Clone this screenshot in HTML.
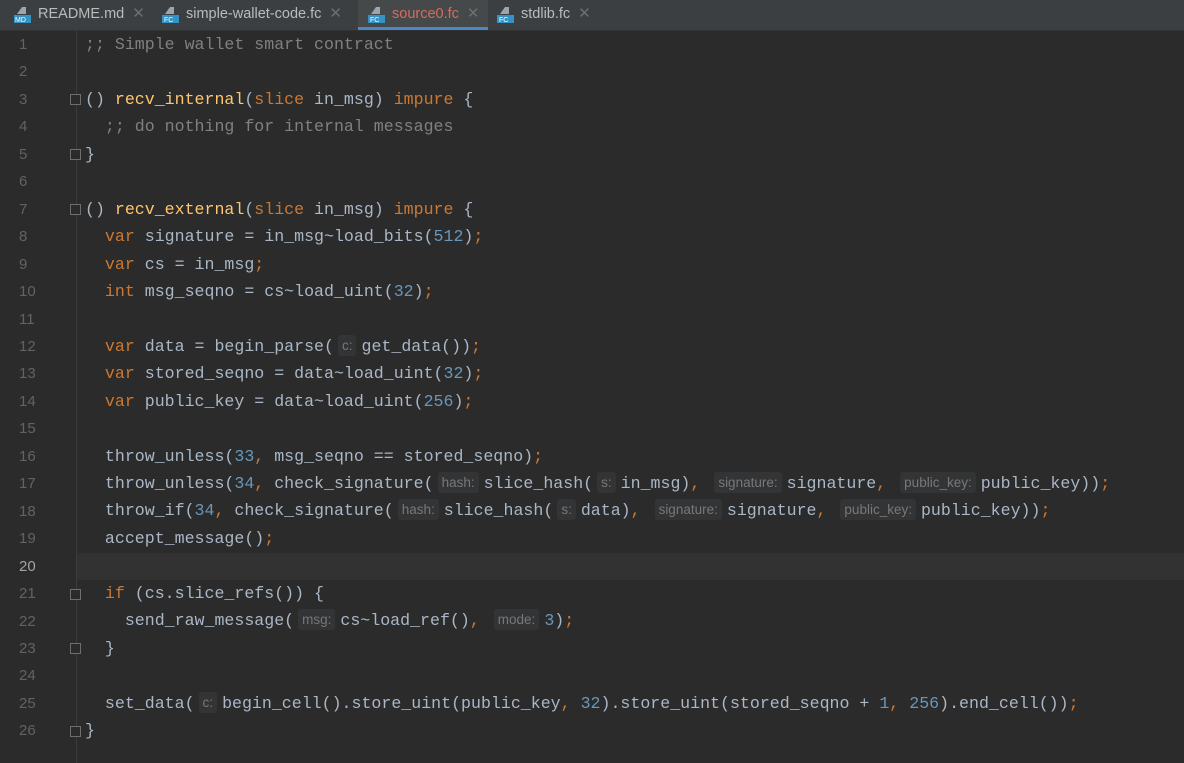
<!DOCTYPE html>
<html><head><meta charset="utf-8"><style>
body{margin:0;width:1184px;height:763px;background:#2b2b2b;overflow:hidden;font-family:"Liberation Mono",monospace;}
.tabs{position:absolute;left:0;top:0;width:1184px;height:30px;background:#3c3f41;border-bottom:1px solid #323232;font-family:"Liberation Sans",sans-serif;font-size:14.5px;color:#bbbbbb;}
.tab{position:absolute;top:0;height:30px;line-height:28px;white-space:nowrap;}
.tab .ic{position:absolute;left:0;top:6px;width:17px;height:17px;}
.tab .x{color:#6e6e6e;margin-left:8px;font-size:15px;}
.act{background:#45494a;border-bottom:3px solid #4a88c7;box-sizing:border-box;}
.gut{position:absolute;left:0;top:31px;width:76px;height:732px;background:#2b2b2b;border-right:1px solid #3c3c3c;}
.ln{position:absolute;left:0;width:40px;text-align:left;padding-left:19px;color:#606366;font-size:15px;font-family:"Liberation Sans",sans-serif;}
.code{position:absolute;left:85px;top:31px;font-size:16.6px;color:#a9b7c6;}
.l{height:27.45px;line-height:27.45px;white-space:pre;}
.k{color:#cc7832}.f{color:#ffc66d}.n{color:#6897bb}.c{color:#808080}
.h{display:inline-block;font-family:"Liberation Sans",sans-serif;font-size:13.5px;color:#787878;background:#333436;border-radius:3px;padding:0 4px;line-height:21px;margin:0 5px 0 4px;vertical-align:1px}
.hl{position:absolute;left:77px;top:553px;width:1107px;height:27px;background:#323232;}
.fold{position:absolute;left:70px;width:9px;height:9px;border:1px solid #6e6e6e;background:#2b2b2b;}
</style></head><body>
<div class="tabs">
<div class="tab act" style="left:358px;width:130px"></div>
<div class="tab" style="left:14px"><svg class="ic" viewBox="0 0 17 17"><path d="M8 1h4v7H3z" fill="#9aa7b0"/><rect x="0" y="9" width="17" height="8" fill="#3592c4"/><text x="1" y="16" font-size="7" fill="#fff" font-family="Liberation Sans">MD</text></svg><span style="margin-left:24px">README.md</span><span class="x">✕</span></div>
<div class="tab" style="left:162px"><svg class="ic" viewBox="0 0 17 17"><path d="M8 1h4v7H3z" fill="#9aa7b0"/><rect x="0" y="9" width="17" height="8" fill="#3592c4"/><text x="2" y="16" font-size="7" fill="#fff" font-family="Liberation Sans">FC</text></svg><span style="margin-left:24px">simple-wallet-code.fc</span><span class="x">✕</span></div>
<div class="tab" style="left:368px"><svg class="ic" viewBox="0 0 17 17"><path d="M8 1h4v7H3z" fill="#9aa7b0"/><rect x="0" y="9" width="17" height="8" fill="#3592c4"/><text x="2" y="16" font-size="7" fill="#fff" font-family="Liberation Sans">FC</text></svg><span style="margin-left:24px;color:#d46d5f">source0.fc</span><span class="x">✕</span></div>
<div class="tab" style="left:497px"><svg class="ic" viewBox="0 0 17 17"><path d="M8 1h4v7H3z" fill="#9aa7b0"/><rect x="0" y="9" width="17" height="8" fill="#3592c4"/><text x="2" y="16" font-size="7" fill="#fff" font-family="Liberation Sans">FC</text></svg><span style="margin-left:24px">stdlib.fc</span><span class="x">✕</span></div>
</div>
<div class="hl"></div>
<div class="gut">
<div class="ln" style="top:0;line-height:27.45px">1<br>2<br>3<br>4<br>5<br>6<br>7<br>8<br>9<br>10<br>11<br>12<br>13<br>14<br>15<br>16<br>17<br>18<br>19<br><span style="color:#a4a3a3">20</span><br>21<br>22<br>23<br>24<br>25<br>26</div>
</div>
<div class="fold" style="top:94px"></div><div class="fold" style="top:149px"></div>
<div class="fold" style="top:204px"></div><div class="fold" style="top:589px"></div>
<div class="fold" style="top:643px"></div><div class="fold" style="top:726px"></div>
<div class="code"><div class="l c">;; Simple wallet smart contract</div><div class="l"> </div><div class="l">() <span class="f">recv_internal</span>(<span class="k">slice</span> in_msg) <span class="k">impure</span> {</div><div class="l c">  ;; do nothing for internal messages</div><div class="l">}</div><div class="l"> </div><div class="l">() <span class="f">recv_external</span>(<span class="k">slice</span> in_msg) <span class="k">impure</span> {</div><div class="l">  <span class="k">var</span> signature = in_msg~load_bits(<span class="n">512</span>)<span class="k">;</span></div><div class="l">  <span class="k">var</span> cs = in_msg<span class="k">;</span></div><div class="l">  <span class="k">int</span> msg_seqno = cs~load_uint(<span class="n">32</span>)<span class="k">;</span></div><div class="l"> </div><div class="l">  <span class="k">var</span> data = begin_parse(<span class="h">c:</span>get_data())<span class="k">;</span></div><div class="l">  <span class="k">var</span> stored_seqno = data~load_uint(<span class="n">32</span>)<span class="k">;</span></div><div class="l">  <span class="k">var</span> public_key = data~load_uint(<span class="n">256</span>)<span class="k">;</span></div><div class="l"> </div><div class="l">  throw_unless(<span class="n">33</span><span class="k">,</span> msg_seqno == stored_seqno)<span class="k">;</span></div><div class="l">  throw_unless(<span class="n">34</span><span class="k">,</span> check_signature(<span class="h">hash:</span>slice_hash(<span class="h">s:</span>in_msg)<span class="k">,</span> <span class="h">signature:</span>signature<span class="k">,</span> <span class="h">public_key:</span>public_key))<span class="k">;</span></div><div class="l">  throw_if(<span class="n">34</span><span class="k">,</span> check_signature(<span class="h">hash:</span>slice_hash(<span class="h">s:</span>data)<span class="k">,</span> <span class="h">signature:</span>signature<span class="k">,</span> <span class="h">public_key:</span>public_key))<span class="k">;</span></div><div class="l">  accept_message()<span class="k">;</span></div><div class="l"> </div><div class="l">  <span class="k">if</span> (cs.slice_refs()) {</div><div class="l">    send_raw_message(<span class="h">msg:</span>cs~load_ref()<span class="k">,</span> <span class="h">mode:</span><span class="n">3</span>)<span class="k">;</span></div><div class="l">  }</div><div class="l"> </div><div class="l">  set_data(<span class="h">c:</span>begin_cell().store_uint(public_key<span class="k">,</span> <span class="n">32</span>).store_uint(stored_seqno + <span class="n">1</span><span class="k">,</span> <span class="n">256</span>).end_cell())<span class="k">;</span></div><div class="l">}</div></div>
</body></html>
